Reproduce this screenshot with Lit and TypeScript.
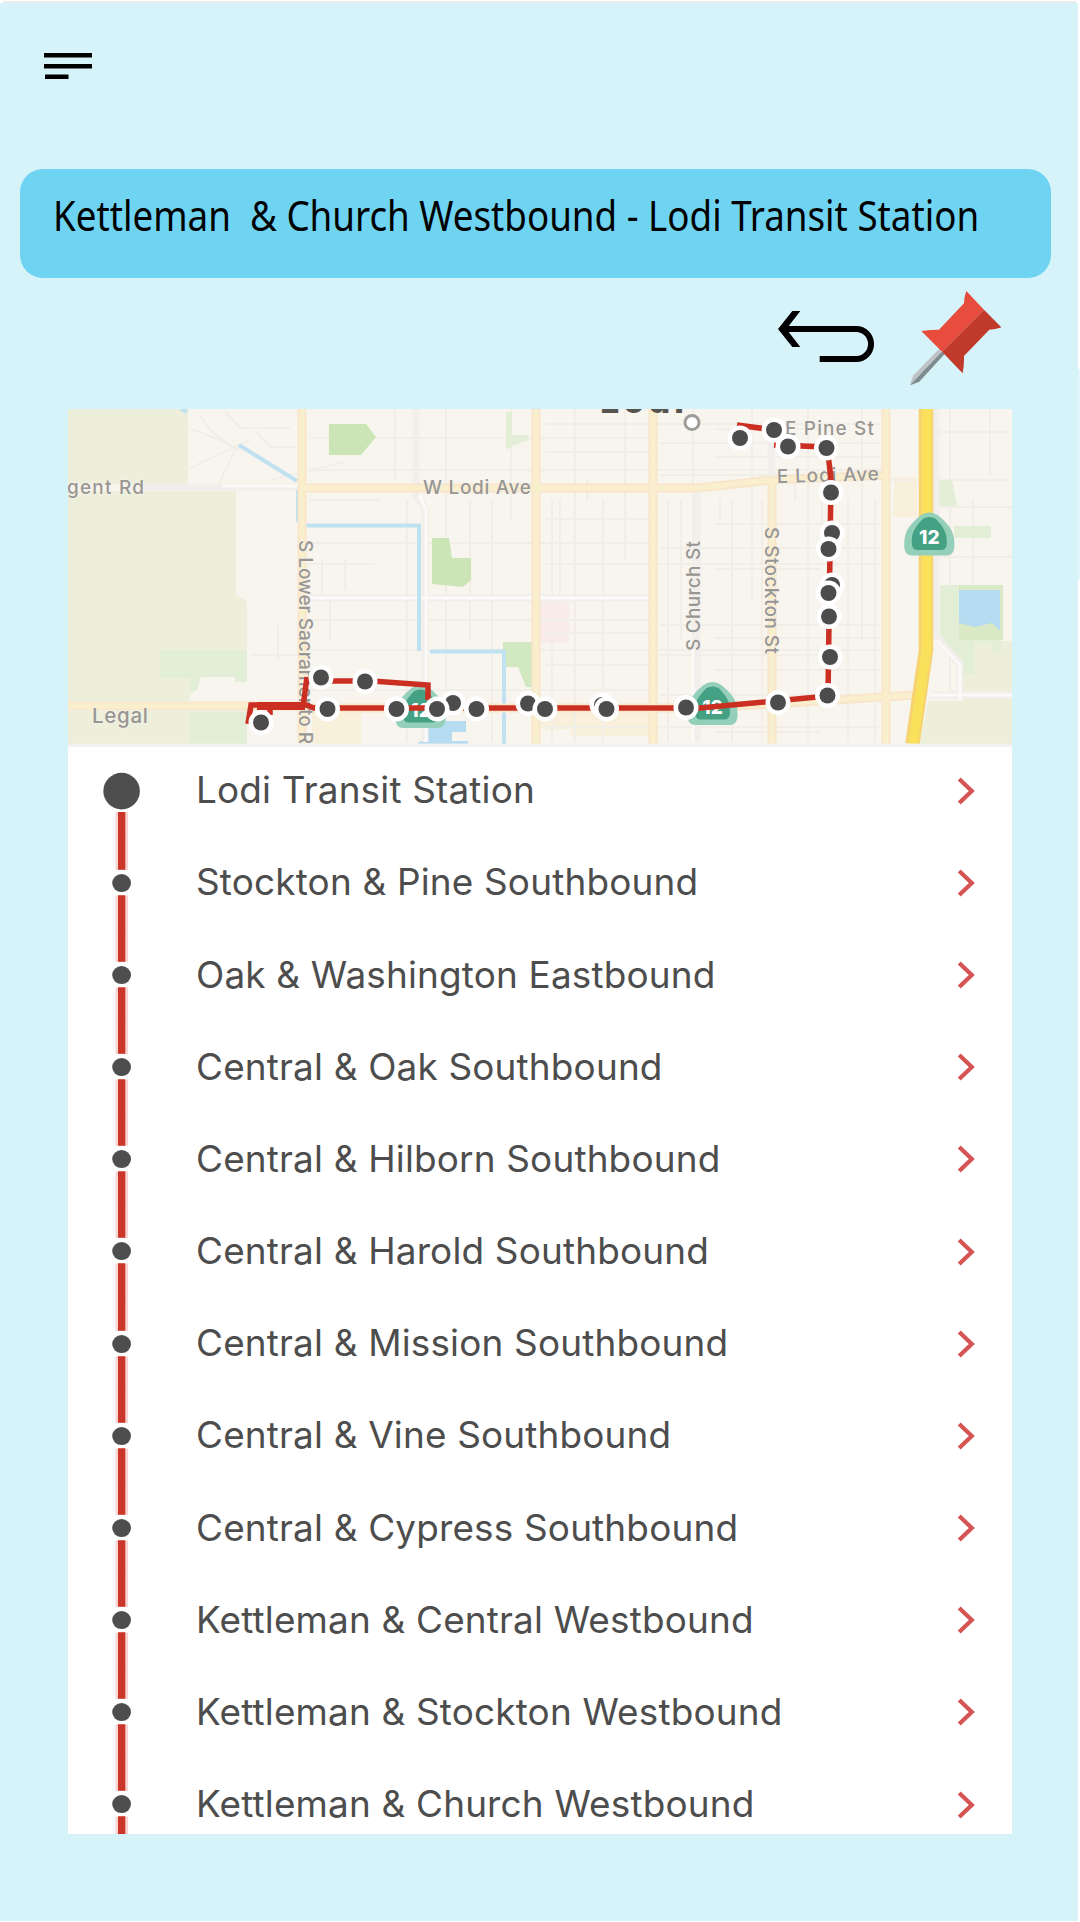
import { LitElement, html, css, svg } from "lit";
import { customElement, property } from "lit/decorators.js";

const STOPS = [
  "Lodi Transit Station",
  "Stockton & Pine Southbound",
  "Oak & Washington Eastbound",
  "Central & Oak Southbound",
  "Central & Hilborn Southbound",
  "Central & Harold Southbound",
  "Central & Mission Southbound",
  "Central & Vine Southbound",
  "Central & Cypress Southbound",
  "Kettleman & Central Westbound",
  "Kettleman & Stockton Westbound",
  "Kettleman & Church Westbound",
];

/* Stops along the route, in map coordinates. */
const MAP_STOPS: [number, number][] = [
  [321, 677.5], [365, 681.5], [261, 722.5], [327.5, 709],
  [453, 703], [396.5, 709], [437, 709], [476.5, 709],
  [528, 703.5], [545, 709], [602, 705], [606.5, 709], [686, 707.5],
  [778, 702.5], [827.5, 695.5], [830, 657], [829, 616.5], [832, 585], [828.5, 593],
  [832, 533], [828.5, 549], [831, 492.5], [826.5, 448], [774, 430], [788, 446.5], [740, 438],
];

@customElement("route-map")
export class RouteMap extends LitElement {
  static styles = css`
    :host { display: block; }
    .map { display: block; width: 944px; height: 338px; }
    .label { font-family: Inter, "Noto Sans", sans-serif; font-weight: 500; fill: #989692; stroke: #f8f4ee; stroke-width: 1px; paint-order: stroke; }
    .city { font-family: Inter, sans-serif; font-weight: 800; fill: #55544f; }
    .shieldno { font-family: Inter, sans-serif; font-weight: 800; fill: #fff; }
    .minor { stroke: #f1ede7; stroke-width: 2; fill: none; }
    .street { stroke: #f1eeeb; stroke-width: 7; fill: none; }
    .streetcore { stroke: #fbfaf8; stroke-width: 3; fill: none; }
    .roadedge { stroke: #f8e6ca; stroke-width: 9; fill: none; }
    .road { stroke: #f9efcd; stroke-width: 5; fill: none; }
    .canal { stroke: #bfe1f0; stroke-width: 4; fill: none; }
    .route { stroke: #cb2f22; stroke-width: 5.5; fill: none; }
  `;

  private shield(x: number, y: number) {
    return svg`
      <g transform="translate(${x} ${y})">
        <path d="M-25 8C-25 -5 -17 -12 -9 -19Q0 -25 9 -19C17 -12 25 -5 25 8Q26 21 17 21H-17Q-26 21 -25 8Z" fill="#94cfb9"></path>
        <path d="M-17.5 7C-18 -3 -12 -10 -6 -16Q0 -19 6 -16C12 -10 18 -3 17.5 7Q18 15.5 12 15.5H-12Q-18 15.5 -17.5 7Z" fill="#45a184"></path>
        <text class="shieldno" x="0" y="9.5" font-size="19" text-anchor="middle">12</text>
      </g>`;
  }

  private minorStreets() {
    const v = [395, 407, 425, 446, 470, 492, 511, 552, 560, 575, 587, 603, 625, 668, 681, 693, 720, 732, 752, 762, 795, 808, 822, 848, 862, 875, 920, 950, 973];
    const h = [424, 438, 452, 470, 519, 543, 564, 620, 633, 650, 665, 690, 727];
    return svg`
      ${v.map((x, i) => svg`<path class="minor" d="M${x} ${i % 3 === 0 ? 409 : 500} V${i % 2 ? 742 : 480 + (i % 5) * 40}"></path>`)}
      ${h.map((y, i) => svg`<path class="minor" d="M${i % 2 ? 310 : 545} ${y} H${i % 3 ? 650 : 880}"></path>`)}
      ${h.map((y, i) => svg`<path class="minor" d="M${i % 2 ? 660 : 715} ${y + 5} H${i % 3 ? 880 : 820}"></path>`)}
      <path class="minor" d="M200 415 Q215 440 240 450 M190 429 Q225 440 235 450 L220 482 M190 468 L250 440 M225 412 L240 428 H290 M255 430 L270 447 H295 M270 480 L345 462 M310 500 H380 M250 655 H300 M278 625 V660 M330 600 V640 M345 560 V590 M322 560 V595 M305 564 H375 M937 458 V640 M890 480 L1012 480 M937 507 H1012 M937 557 H1012 M990 409 V475 M937 432 H1012"></path>`;
  }

  render() {
    return html`
      <svg class="map" viewBox="68 409 944 338">
        <rect x="68" y="409" width="944" height="338" fill="#f8f4ee"></rect>
        <path d="M68 409H188V484H68Z M68 491H236V594L247 602V701H68Z M68 711H247V744H68Z" fill="#edefda"></path>
        <path d="M160 650H247V682H235L232 677H201L196 692H190V678H160Z M190 712H247V744H190Z" fill="#e2efd6"></path>
        <path d="M190 701V694L197 690L201 677H235V682H247V701Z" fill="#f8f4ee"></path>
        <path d="M312 711H361V744H312Z M540 711H655V736H571V729H540Z M895 477H917V517H893Z" fill="#f8f0da"></path>
        <rect x="539" y="602" width="30" height="41" fill="#f8ebea"></rect>
        ${this.minorStreets()}
        <path d="M329 424H366L376 437L361 455H329Z M432 538H449L452 558H471V580L463 587L432 584Z" fill="#cce5b6"></path>
        <path d="M503 642H534V687H526L518 667H503Z" fill="#d2e8c0"></path>
        <path d="M506 412H512V435H528V440L512 446L506 450Z M937 480H952L957 506H937Z M954 526H991V538H954Z M940 585H1003V640H1001V652H993V643H974V674H962V660L940 640Z" fill="#e2efd6"></path>
        <path d="M959 585H1003V640H959Z" fill="#d9e9c5"></path>
        <path d="M1003 641H1012V744H920L928 701H962V674H974V643H993V652H1001V641Z" fill="#edefda"></path>
        <path d="M959 590H1000V631L992 623L975 627L959 623Z" fill="#b5dcf0"></path>
        <path d="M427 723L432 721H466V732H452V741H468V744H417L428 735Z" fill="#b5dcf0"></path>
        <path class="street" d="M130 487H300 M416 409V495L425 510V742 M310 598H652 M771 440V482 M697 485V742 M936 409V635L960 665V700 M931 695H1012"></path>
        <path class="streetcore" d="M222 486H300 M419 495L426 510V742 M310 598H650 M693 650V742 M937 640L960 665V700 M931 695H1012"></path>
        <path d="M181 409L187 412" class="canal"></path>
        <path class="canal" d="M239 445L297 481M298 490V522M306 525.5H419V649H421M430 651.5H504V744"></path>
        <path class="roadedge" d="M302 409V744 M68 706H310 M302 488H698L772 480 M772 480V744 M536 409V744 M653 409V744 M772 480L886 475 M886 409V744 M310 708H700L772 704L915 695"></path>
        <path class="road" d="M302 409V744 M68 706H310 M302 488H698L772 480 M772 480V744 M536 409V744 M653 409V744 M772 480L886 475 M886 409V744 M310 708H700L772 704L915 695"></path>
        <path d="M926 409V650L912.5 744" fill="none" stroke="#f6d272" stroke-width="14.5"></path>
        <path d="M926.5 409V650L913 744" fill="none" stroke="#f9e15c" stroke-width="9.5"></path>

        <text class="label" x="67" y="493.5" font-size="19" textLength="77">gent Rd</text>
        <text class="label" x="423" y="493.5" font-size="19" textLength="108">W Lodi Ave</text>
        <text class="label" x="92" y="723" font-size="20.5" textLength="56">Legal</text>
        <text class="label" x="785" y="434.5" font-size="19" textLength="89">E Pine St</text>
        <text class="label" x="777" y="483" font-size="19" textLength="102" transform="rotate(-1.5 777 482)">E Lodi Ave</text>
        <text class="label" transform="translate(299 540) rotate(90)" font-size="19" textLength="204">S Lower Sacramento R</text>
        <text class="label" transform="translate(700 651) rotate(-90)" font-size="19" textLength="110">S Church St</text>
        <text class="label" transform="translate(765 527) rotate(90)" font-size="19" textLength="127">S Stockton St</text>
        <text class="city" x="600" y="412.5" font-size="34" textLength="84">Lodi</text>
        <circle cx="692" cy="422.5" r="7" fill="#fff" stroke="#9c9c98" stroke-width="3"></circle>

        ${this.shield(420.5, 707)}
        ${this.shield(712.5, 704)}
        ${this.shield(929.3, 534.5)}

        <path class="route" d="M248 724L251 705H306L314 708H700L828 696L831 478L827 447L774 445 M303 707L307 677 M270 705V715 M321 681H372L428 685V700 M737 425L774 430"></path>
        <path d="M257 706H305" stroke="#cb2f22" stroke-width="8"></path>
        ${MAP_STOPS.map(([x, y]) => svg`<circle cx=${x} cy=${y} r="12.5" fill="#fff"></circle><circle cx=${x} cy=${y} r="8" fill="#4c4c4c"></circle>`)}
        <rect x="68" y="743.6" width="944" height="3.4" fill="#f4f2ee"></rect>
      </svg>`;
  }
}

@customElement("stop-row")
export class StopRow extends LitElement {
  @property() name = "";
  @property({ type: Boolean }) first = false;

  static styles = css`
    :host { display: block; flex: none; height: 92.18px; }
    .row { display: grid; grid-template-columns: 107px 1fr 18px; column-gap: 21px; height: 100%; align-items: center; padding-right: 37px; box-sizing: border-box; }
    .rail { display: block; width: 107px; height: 92.18px; overflow: visible; }
    .name { font: 400 36.9px/1 Inter, "Liberation Sans", sans-serif; color: #4d4d4d; white-space: pre; letter-spacing: 0.18px; }
    .chev { display: block; width: 18px; height: 30px; }
  `;

  render() {
    return html`
      <div class="row">
        <svg class="rail" viewBox="0 0 107 92.18">
          ${this.first
            ? svg`<rect x="47.5" y="67" width="12.5" height="26" fill="#f6d5d2"></rect><rect x="50" y="67" width="7.3" height="26" fill="#cc3529"></rect><circle cx="53.6" cy="46.1" r="18.3" fill="#4e4e4e"></circle>`
            : svg`<path d="M47.5 0h12.5v33h-12.5z M47.5 58.5h12.5v34.2h-12.5z" fill="#f6d5d2"></path><path d="M50 -1h7.3v33.8h-7.3z M50 58.2h7.3v35h-7.3z" fill="#cc3529"></path><ellipse cx="53.6" cy="46.1" rx="9.4" ry="9" fill="#4e4e4e"></ellipse>`}
        </svg>
        <span class="name">${this.name}</span>
        <svg class="chev" viewBox="0 0 18 30"><path d="M2.2 3L14.8 15L2.2 27" fill="none" stroke="#d55454" stroke-width="4.2"></path></svg>
      </div>`;
  }
}

@customElement("app-root")
export class AppRoot extends LitElement {
  static styles = css`
    :host { display: block; background: linear-gradient(#fff 369px, #e2f6fb 369px, #e2f6fb 580px, #fff 580px); }
    .page { box-sizing: border-box; height: 1922px; display: flex; flex-direction: column; background: #d7f3fa; background-clip: padding-box; overflow: hidden; border-right: 2px solid transparent; border-bottom: 1px solid transparent; }
    .edge { flex: none; height: 3px; background: #fff; padding: 1px 2px 0 3px; box-sizing: border-box; }
    .edgeline { height: 2px; background: #ebebe9; }
    .menu { display: block; flex: none; width: 48px; height: 27px; margin: 50px 0 0 44px; }
    .title { flex: none; margin: 89px 0 0 20px; width: 1031px; height: 108.5px; box-sizing: border-box; border-radius: 23px; background: #6fd4f2; padding: 19px 0 0 33px; }
    .titletext { display: inline-block; transform-origin: 0 0; transform: scaleX(0.896); font: 400 41px/54px "Noto Sans", "Open Sans", sans-serif; color: #000; white-space: pre; }
    .tools { flex: none; display: flex; justify-content: flex-end; align-items: flex-start; gap: 36px; margin-top: 13.5px; padding-right: 77px; height: 118px; }
    .back { display: block; width: 95.7px; height: 51px; margin-top: 19.5px; }
    .pin { display: block; width: 91.3px; height: 94.7px; }
    .card { flex: none; margin-left: 68px; width: 944px; height: 1425px; background: #fff; overflow: hidden; display: flex; flex-direction: column; }
    .mapbox { flex: none; height: 335.6px; }
    .list { flex: none; display: flex; flex-direction: column; }
  `;

  render() {
    return html`
      <main class="page">
        <div class="edge"><div class="edgeline"></div></div>
        <svg class="menu" viewBox="0 0 48 27"><path d="M0 0H48V4.6H0Z M0 11H48V15.6H0Z M1 21.4H24.5V26H1Z"></path></svg>
        <header class="title"><span class="titletext">Kettleman  &amp; Church Westbound - Lodi Transit Station</span></header>
        <nav class="tools">
          <svg class="back" viewBox="115 93 287 153">
            <path d="M158 93H182L147 138H350A53 54 0 0 1 350 246H240V228H350A35 36 0 0 0 350 156H147L182 201H158L115 147Z"></path>
          </svg>
          <svg class="pin" viewBox="510 34 274 284">
            <path d="M598 207L519 288L510 317L608 222Z" fill="#bdc3c7"></path>
            <path d="M606 216L614 223L537 307L510 317Z" fill="#7f8c8d"></path>
            <path d="M679 34L732 90L606 216L544 154Q571 150 597 150L672 71Q672 53 679 34Z" fill="#e74c3c"></path>
            <path d="M732 90L784 143Q767 149 748 150L672 229Q673 257 668 281L606 216Z" fill="#c0392b"></path>
          </svg>
        </nav>
        <section class="card">
          <route-map class="mapbox"></route-map>
          <div class="list">
            ${STOPS.map((s, i) => html`<stop-row .name=${s} ?first=${i === 0}></stop-row>`)}
          </div>
        </section>
      </main>`;
  }
}
